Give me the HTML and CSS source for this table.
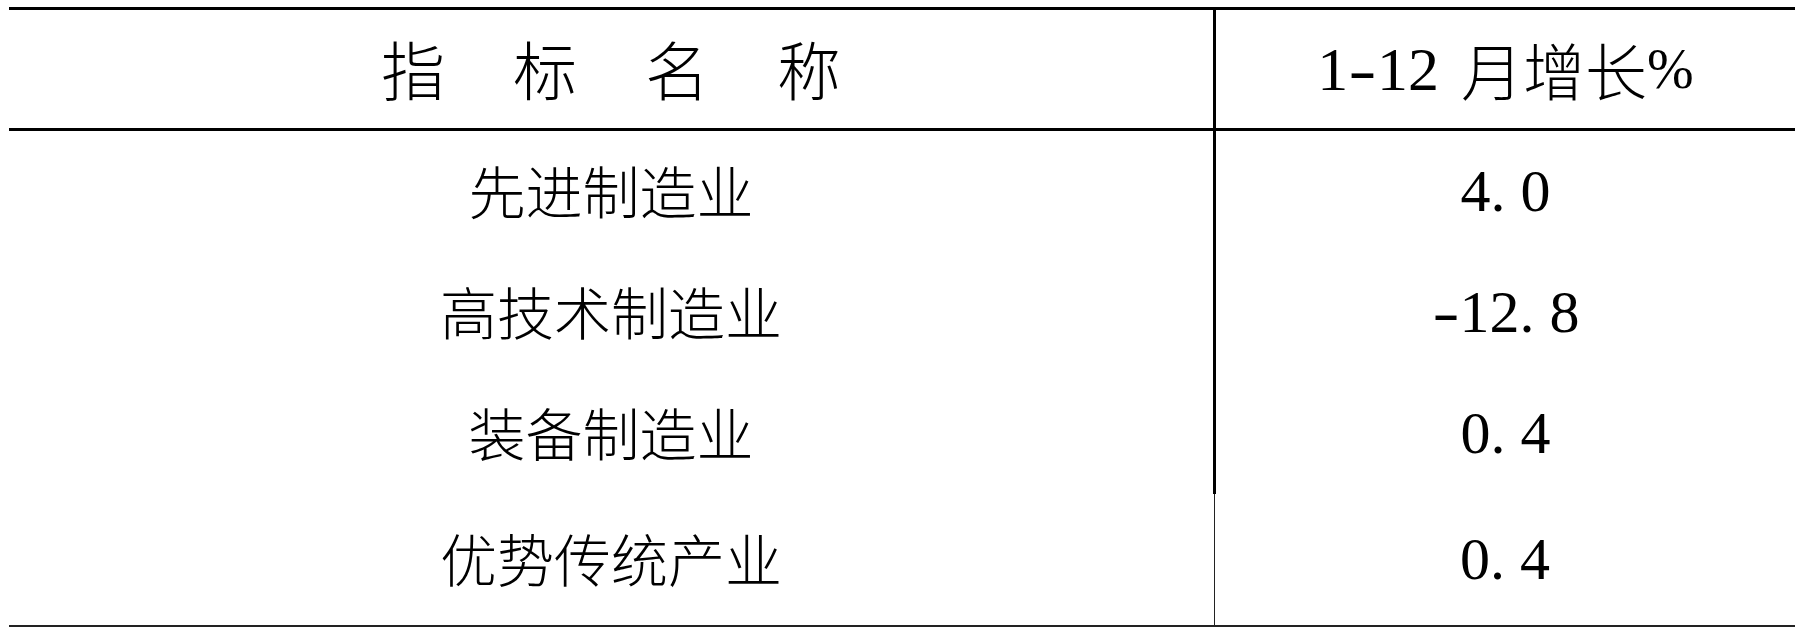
FILE: index.html
```html
<!DOCTYPE html>
<html lang="zh-CN">
<head>
<meta charset="utf-8">
<title>指标名称</title>
<link rel="stylesheet" href="styles.css">
</head>
<body>
<div class="sheet">
  <div class="row head">
    <div class="cell name"><span class="spaced">指标名称</span></div>
    <div class="cell val"><span class="num">1<span class="dash">-</span>12</span><span class="gap"> </span><span class="cjk">月增长</span><span class="num pct">%</span></div>
  </div>
  <div class="row">
    <div class="cell name">先进制造业</div>
    <div class="cell val num">4<span class="pt">.</span>0</div>
  </div>
  <div class="row">
    <div class="cell name">高技术制造业</div>
    <div class="cell val num"><span class="dash">-</span>12<span class="pt">.</span>8</div>
  </div>
  <div class="row">
    <div class="cell name">装备制造业</div>
    <div class="cell val num">0<span class="pt">.</span>4</div>
  </div>
  <div class="row last">
    <div class="cell name">优势传统产业</div>
    <div class="cell val num">0<span class="pt">.</span>4</div>
  </div>
</div>
</body>
</html>
```

FILE: styles.css
```css
html, body {
  margin: 0;
  padding: 0;
  background: #ffffff;
  color: #000000;
}

.sheet {
  margin-left: 9px;
  padding-top: 7px;
  font-family: "Noto Sans CJK SC", "Noto Sans CJK TC", sans-serif;
  font-weight: 300;
}

.row {
  display: grid;
  grid-template-columns: 1204px 1fr;
  height: 121px;
}

.row.head {
  height: 118px;
  border-top: 3px solid #000;
  border-bottom: 3px solid #000;
}

.row.last {
  height: 131px;
  border-bottom: 2px solid #222;
}

.cell {
  display: flex;
  align-items: center;
  justify-content: center;
  white-space: nowrap;
  line-height: 1;
}

.name {
  font-size: 57px;
  padding-bottom: 4px;
}

.head .name {
  font-size: 64px;
}

.spaced {
  letter-spacing: 68px;
  margin-right: -68px;
}

.val {
  border-left: 3px solid #000;
}

.last .val {
  border-left: 1px solid #222;
  margin-left: 1px;
}

.num {
  font-family: "Liberation Serif", serif;
  font-size: 60px;
  font-weight: 400;
}

.val.num {
  padding-bottom: 2px;
}

.pt {
  padding-right: 15px;
}

.dash {
  display: inline-block;
  transform: scaleX(1.35);
  margin: 0 4px;
}

.head .val .num {
  font-size: 62px;
}

.head .val .pct {
  font-size: 56px;
}

.gap {
  display: inline-block;
  width: 22px;
}

.cjk {
  font-family: "Noto Sans CJK SC", sans-serif;
  font-size: 62px;
}
```
